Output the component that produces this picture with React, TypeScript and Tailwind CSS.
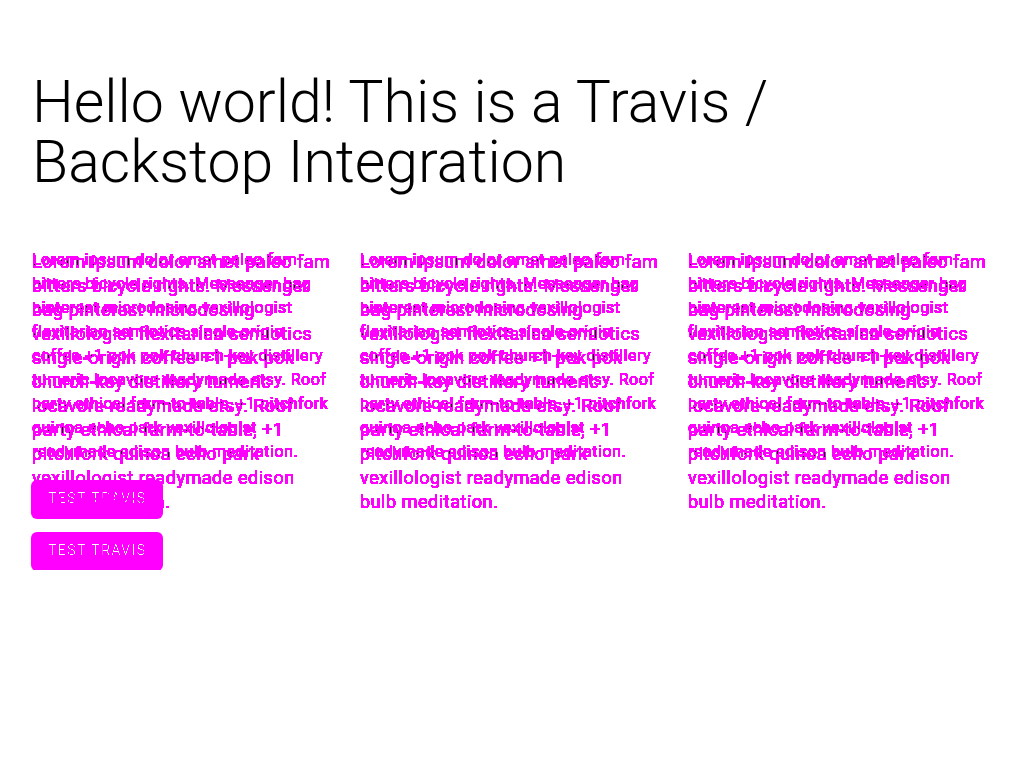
const copy =
  "Lorem ipsum dolor amet paleo fam bitters bicycle rights. Messenger bag pinterest microdosing vexillologist flexitarian semiotics single-origin coffee +1 pok pok church-key distillery tumeric locavore readymade etsy. Roof party ethical farm-to-table, +1 pitchfork quinoa echo park vexillologist readymade edison bulb meditation.";

/* "diff" paints any half-transparent ink magenta and keeps ink that both layers share black.
   "core" keeps only the fully covered pixels of thin lettering. */
function DiffFilters() {
  return (
    <svg width="0" height="0" className="absolute" aria-hidden="true">
      <filter id="diff" colorInterpolationFilters="sRGB">
        <feColorMatrix
          type="matrix"
          values="0 0 0 -100 75
                  0 0 0 0 0
                  0 0 0 -100 75
                  0 0 0 200 -1"
        />
      </filter>
      <filter id="core" colorInterpolationFilters="sRGB">
        <feComponentTransfer>
          <feFuncA type="linear" slope="5" intercept="-2.5" />
        </feComponentTransfer>
      </filter>
    </svg>
  );
}

function Column() {
  return (
    <div className="relative z-10 text-black/50 [filter:url(#diff)]">
      <p className="text-base leading-6 tracking-[0.03em]">{copy}</p>
      <p className="absolute top-0.5 right-1 left-0 text-lg leading-6 tracking-[0.03em]">{copy}</p>
    </div>
  );
}

function TravisButton() {
  return (
    <button
      type="button"
      className="h-[37px] rounded-[5px] bg-[#ff00ff] px-4 pb-1 text-sm font-light tracking-[1.5px] text-white ring-1 ring-[#ff00ff]"
    >
      <span className="[filter:url(#core)]">TEST TRAVIS</span>
    </button>
  );
}

export default function App() {
  return (
    <main className="bg-white px-8 pt-18 font-['Roboto',sans-serif] text-black">
      <DiffFilters />
      <h1 className="max-w-3xl text-[59px] leading-[60px] font-light">
        Hello world! This is a Travis / Backstop Integration
      </h1>
      <div className="mt-14 grid grid-cols-3 gap-6">
        <Column />
        <Column />
        <Column />
      </div>
      <div className="mt-[17px] flex flex-col items-start gap-[15px]">
        <TravisButton />
        <TravisButton />
      </div>
    </main>
  );
}
